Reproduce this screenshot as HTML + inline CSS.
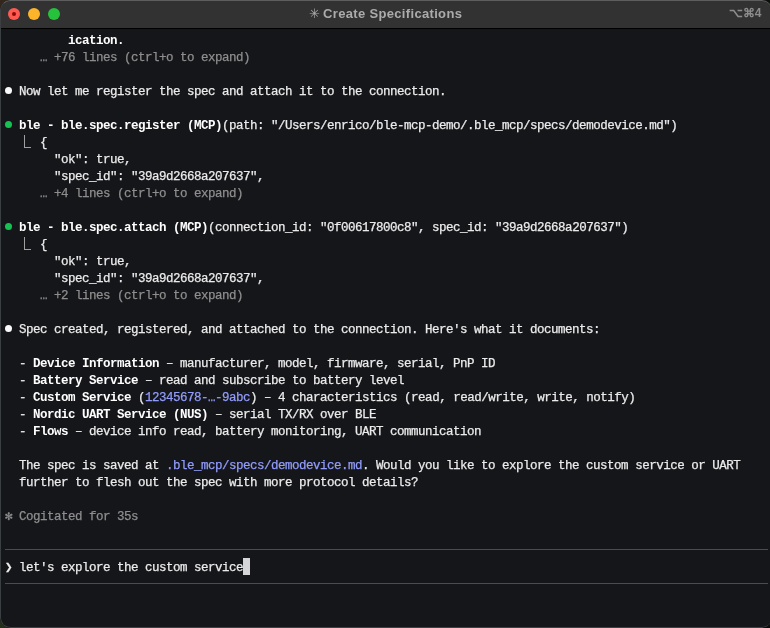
<!DOCTYPE html>
<html><head><meta charset="utf-8"><style>
html,body{margin:0;padding:0;width:770px;height:628px;overflow:hidden;background:#15161a;position:relative;}
.cn{position:absolute;width:14px;height:14px;}
.win{position:absolute;left:0;top:0;width:772px;height:628px;border-radius:10px;overflow:hidden;background:#15161a;}
.tb{will-change:transform;position:absolute;left:0;top:0;width:772px;height:28px;background:#323232;border-bottom:1px solid #000;}
.tl{position:absolute;top:8px;width:12px;height:12px;border-radius:50%;}
.x{position:absolute;left:4px;top:4px;width:4px;height:4px;border-radius:50%;background:#8c0a08;}
.title{position:absolute;left:0;top:0;width:770px;text-align:center;line-height:28px;font-family:"Liberation Sans",sans-serif;font-weight:bold;font-size:13px;letter-spacing:0.33px;color:#ababab;}
.kb{position:absolute;right:10.5px;top:-1px;line-height:28px;font-family:"Liberation Sans",sans-serif;font-weight:bold;font-size:12px;color:#8c8c8c;}
.term{will-change:transform;position:absolute;left:0;top:0;width:770px;height:628px;font-family:"Liberation Mono",monospace;font-size:12.5px;letter-spacing:-0.5px;color:#ebebeb;-webkit-text-stroke:0.25px currentColor;}
.r{position:absolute;left:5.0px;height:17px;line-height:17px;white-space:pre;}
b{font-weight:bold;color:#ffffff;-webkit-text-stroke:0;}
.d{color:#8e8e8e;}
.l{color:#919cfb;}
.bu{position:absolute;left:-0.1px;top:3.3px;width:7px;height:7px;border-radius:50%;}
.bw{background:#fafafa;}
.bg{background:#16c152;}
.el{position:absolute;left:18.8px;top:0px;width:6px;height:12px;border-left:1px solid #a0a0a0;border-bottom:1px solid #a0a0a0;}
.pr{color:#f0f0f0;font-weight:bold;}
.cur{position:absolute;top:-2px;width:7px;height:17px;background:#d6d6d8;}
.sep{position:absolute;left:5px;width:763px;height:1px;background:#4b4c50;}
.bd{position:absolute;left:0;top:0;width:772px;height:628px;box-sizing:border-box;border-radius:10px;border-left:1px solid #3b3f42;border-bottom:1px solid #404145;border-top:1px solid #5e5e5e;}
.ast{font-weight:normal;font-size:13px;position:relative;left:1px;}

</style></head><body>
<div class="cn" style="left:0;top:0;background:#33261a;"></div>
<div class="cn" style="right:0;top:0;background:#0b0f0a;"></div>
<div class="cn" style="left:0;bottom:0;background:#25301a;"></div>
<div class="cn" style="right:0;bottom:0;background:#0a0c0a;"></div>
<div class="win">
<div class="tb">
<div class="tl" style="left:8px;background:#ff5a52;"><div class="x"></div></div>
<div class="tl" style="left:28px;background:#fdb42a;"></div>
<div class="tl" style="left:48px;background:#26c23c;"></div>
<div class="title"><span class="ast">✳</span> Create Specifications</div>
<div class="kb">⌥⌘4</div>
</div>
<div class="term">
<div class="r" style="top:33px">         <b>ication.</b></div>
<div class="r" style="top:50px">     <span class="d">… +76 lines (ctrl+o to expand)</span></div>
<div class="r" style="top:84px"><span class="bu bw"></span>  Now let me register the spec and attach it to the connection.</div>
<div class="r" style="top:118px"><span class="bu bg"></span>  <b>ble - ble.spec.register (MCP)</b>(path: "/Users/enrico/ble-mcp-demo/.ble_mcp/specs/demodevice.md")</div>
<div class="r" style="top:135px"><span class="el"></span>     {</div>
<div class="r" style="top:152px">       "ok": true,</div>
<div class="r" style="top:169px">       "spec_id": "39a9d2668a207637",</div>
<div class="r" style="top:186px">     <span class="d">… +4 lines (ctrl+o to expand)</span></div>
<div class="r" style="top:220px"><span class="bu bg"></span>  <b>ble - ble.spec.attach (MCP)</b>(connection_id: "0f00617800c8", spec_id: "39a9d2668a207637")</div>
<div class="r" style="top:237px"><span class="el"></span>     {</div>
<div class="r" style="top:254px">       "ok": true,</div>
<div class="r" style="top:271px">       "spec_id": "39a9d2668a207637",</div>
<div class="r" style="top:288px">     <span class="d">… +2 lines (ctrl+o to expand)</span></div>
<div class="r" style="top:322px"><span class="bu bw"></span>  Spec created, registered, and attached to the connection. Here's what it documents:</div>
<div class="r" style="top:356px">  - <b>Device Information</b> – manufacturer, model, firmware, serial, PnP ID</div>
<div class="r" style="top:373px">  - <b>Battery Service</b> – read and subscribe to battery level</div>
<div class="r" style="top:390px">  - <b>Custom Service</b> (<span class="l">12345678-…-9abc</span>) – 4 characteristics (read, read/write, write, notify)</div>
<div class="r" style="top:407px">  - <b>Nordic UART Service (NUS)</b> – serial TX/RX over BLE</div>
<div class="r" style="top:424px">  - <b>Flows</b> – device info read, battery monitoring, UART communication</div>
<div class="r" style="top:458px">  The spec is saved at <span class="l">.ble_mcp/specs/demodevice.md</span>. Would you like to explore the custom service or UART</div>
<div class="r" style="top:475px">  further to flesh out the spec with more protocol details?</div>
<div class="r" style="top:509px"><span class="d">✻ Cogitated for 35s</span></div>
<div class="r" style="top:560px"><span class="pr">❯</span> let's explore the custom service<span class="cur"></span></div>
<div class="sep" style="top:549px"></div>
<div class="sep" style="top:583px"></div>
</div>
<div class="bd"></div>
</div>
</body></html>
